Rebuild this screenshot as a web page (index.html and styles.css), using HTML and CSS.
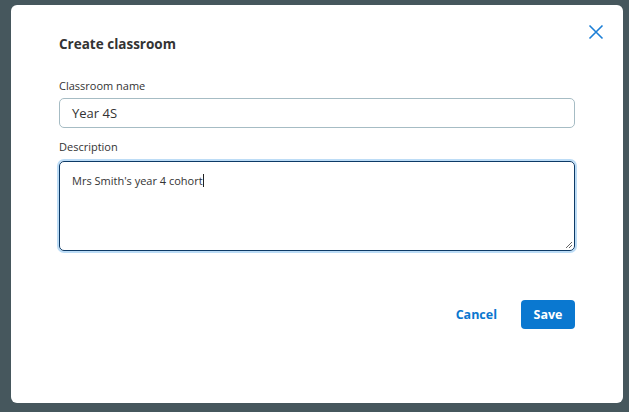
FILE: index.html
```html
<!DOCTYPE html>
<html>
<head>
<meta charset="utf-8">
<link rel="stylesheet" href="styles.css">
</head>
<body>
<div class="modal">
  <button class="close" aria-label="Close">
    <svg width="16" height="16" viewBox="0 0 16 16"><path d="M1.5 1.5 L14.5 14.5 M14.5 1.5 L1.5 14.5" stroke="#1c7fd6" stroke-width="1.6" fill="none"/></svg>
  </button>
  <h1 class="title">Create classroom</h1>
  <label class="label">Classroom name</label>
  <div class="input">Year 4S</div>
  <label class="label label-desc">Description</label>
  <div class="textarea"><span>Mrs Smith's year 4 cohort</span><span class="caret"></span>
    <svg class="grip" width="8" height="8" viewBox="0 0 8 8"><path d="M7 1 L1 7 M7 4 L4 7" stroke="#666" stroke-width="1"/></svg>
  </div>
  <div class="actions">
    <span class="cancel">Cancel</span>
    <span class="save">Save</span>
  </div>
</div>
</body>
</html>
```
FILE: styles.css
```css
* { box-sizing: border-box; }
html, body { margin: 0; padding: 0; }
body {
  width: 629px; height: 412px;
  background: #46575d;
  font-family: "Open Sans", "Liberation Sans", sans-serif;
  padding: 5px 6px 9px 11px;
}
.modal {
  position: relative;
  width: 612px; height: 398px;
  background: #fff;
  border-radius: 6px;
  padding: 30px 48px 0 48px;
  display: flex; flex-direction: column;
}
.close {
  position: absolute; top: 19px; right: 19px;
  background: none; border: 0; padding: 0; width: 16px; height: 16px;
}
.title {
  margin: 0; font-size: 13.5px; font-weight: 700; color: #333;
  line-height: 18px;
}
.label {
  display: block; font-size: 11px; color: #333; margin-top: 26px; line-height: 14px;
}
.label-desc { margin-top: 12px; }
.input {
  margin-top: 5px; height: 30px; border: 1px solid #a6bcc4; border-radius: 5px;
  padding: 0 12px; font-size: 13px; color: #333; line-height: 28px;
}
.textarea {
  position: relative;
  margin-top: 7px; height: 90px; border: 1px solid #0d3a66; border-radius: 5px;
  box-shadow: 0 0 0 2px #bcdcf6;
  padding: 12px 12px; font-size: 11px; color: #333; line-height: 14px;
}
.caret { display: inline-block; width: 1px; height: 13px; background: #222; vertical-align: -2px; }
.grip { position: absolute; right: 1px; bottom: 1px; }
.actions {
  margin-top: 49px; display: flex; justify-content: flex-end; align-items: center;
}
.cancel { color: #0a77cf; font-weight: 700; font-size: 12.5px; margin-right: 24px; }
.save {
  background: #0a78d0; color: #fff; font-weight: 700; font-size: 12.5px;
  width: 54px; height: 29px; border-radius: 4px;
  display: flex; align-items: center; justify-content: center;
}
```
